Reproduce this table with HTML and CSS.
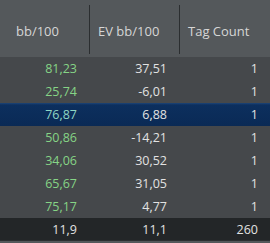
FILE: index.html
```html
<!DOCTYPE html>
<html>
<head>
<meta charset="utf-8">
<link rel="stylesheet" href="styles.css">
</head>
<body>
<div class="grid">
  <div class="row head">
    <div class="cell first">bb/100</div>
    <div class="cell">EV bb/100</div>
    <div class="cell">Tag Count</div>
  </div>
  <div class="row"><div class="cell first num green">81,23</div><div class="cell num">37,51</div><div class="cell num">1</div></div>
  <div class="row"><div class="cell first num green">25,74</div><div class="cell num">-6,01</div><div class="cell num">1</div></div>
  <div class="row sel"><div class="cell first num green">76,87</div><div class="cell num">6,88</div><div class="cell num">1</div></div>
  <div class="row"><div class="cell first num green">50,86</div><div class="cell num">-14,21</div><div class="cell num">1</div></div>
  <div class="row"><div class="cell first num green">34,06</div><div class="cell num">30,52</div><div class="cell num">1</div></div>
  <div class="row"><div class="cell first num green">65,67</div><div class="cell num">31,05</div><div class="cell num">1</div></div>
  <div class="row"><div class="cell first num green">75,17</div><div class="cell num">4,77</div><div class="cell num">1</div></div>
  <div class="row foot"><div class="cell first num">11,9</div><div class="cell num">11,1</div><div class="cell num">260</div></div>
</div>
</body>
</html>
```
FILE: styles.css
```css
html, body {
  margin: 0;
  padding: 0;
  background: #54585b;
}
body {
  width: 270px;
  height: 243px;
  overflow: hidden;
  font-family: "Open Sans", "Noto Sans", sans-serif;
  font-size: 12.5px;
}
.grid {
  display: flex;
  flex-direction: column;
  background: #45484b;
}
.row {
  display: grid;
  grid-template-columns: 89px 90px 91px;
  height: 23px;
  align-items: center;
  color: #e2e2e2;
}
.cell {
  padding: 0 12px 0 8px;
  white-space: nowrap;
}
.cell.first {
  padding-left: 16px;
}
.num {
  text-align: right;
}
.green {
  color: #86d486;
}
.head {
  height: 57px;
  background: #54585b;
  color: #d6d6d6;
  align-items: stretch;
  font-size: 13px;
}
.head .cell {
  display: flex;
  align-items: center;
  border-left: 1px solid #2b2e30;
  margin: 5px 0 3px;
  padding-top: 2px;
}
.head .cell.first {
  border-left: none;
}
.sel {
  background: linear-gradient(#1d4577 0, #0c2f5e 2px, #0a2a55 100%);
}
.sel .green {
  color: #8fd6c4;
}
.foot {
  height: 22px;
  background: #232628;
  border-bottom: 1px solid #2c2f31;
}
```
